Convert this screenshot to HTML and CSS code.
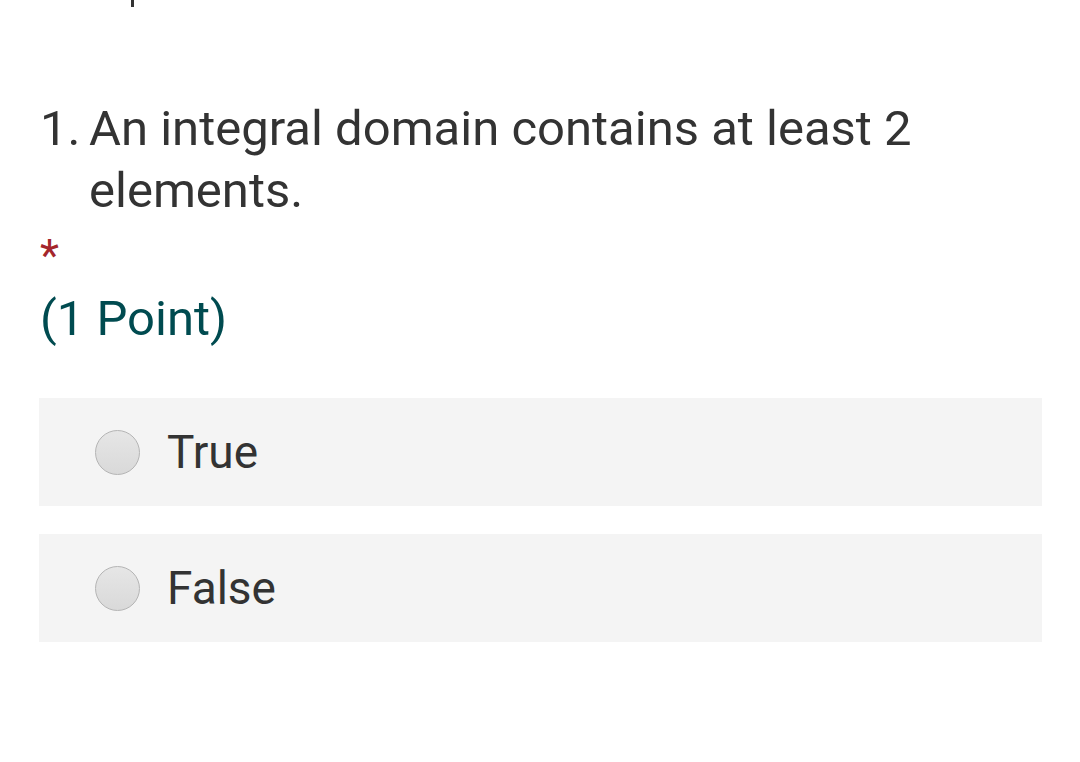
FILE: index.html
```html
<!DOCTYPE html>
<html>
<head>
<meta charset="utf-8">
<link rel="stylesheet" href="styles.css">
</head>
<body>
<div class="page">
  <div class="top-mark"></div>
  <div class="question">
    <div class="title">
      <span class="num">1.</span>
      <span class="text">An integral domain contains at least 2 elements.</span>
    </div>
    <div class="required">*</div>
    <div class="points">(1 Point)</div>
  </div>
  <div class="options">
    <label class="option">
      <span class="radio"></span>
      <span class="label">True</span>
    </label>
    <label class="option">
      <span class="radio"></span>
      <span class="label">False</span>
    </label>
  </div>
</div>
</body>
</html>
```

FILE: styles.css
```css
html, body {
  margin: 0;
  padding: 0;
  background: #ffffff;
}
.page {
  font-family: Roboto, "Noto Sans", sans-serif;
  color: #333333;
  width: 1080px;
  height: 762px;
  overflow: hidden;
}
.top-mark {
  width: 3px;
  height: 7px;
  margin-left: 131px;
  background: #333333;
}
.question {
  padding-left: 40px;
  padding-top: 91px;
  padding-right: 100px;
}
.title {
  display: flex;
  font-size: 49px;
  line-height: 62px;
  color: #333333;
}
.num {
  flex: 0 0 49px;
}
.text {
  flex: 1;
}
.required {
  color: #a4262c;
  font-size: 44px;
  line-height: 40px;
  height: 40px;
  margin-top: 14px;
}
.points {
  color: #004b50;
  font-size: 49px;
  line-height: 62px;
  margin-top: 12px;
}
.options {
  margin-top: 48px;
  padding-left: 39px;
  padding-right: 38px;
  display: flex;
  flex-direction: column;
  gap: 28px;
}
.option {
  display: flex;
  align-items: center;
  height: 108px;
  background: #f4f4f4;
  padding-left: 56px;
}
.radio {
  border-radius: 50%;
  border: 1px solid #b4b4b4;
  background: linear-gradient(#e6e6e6, #d9d9d9);
  box-sizing: border-box;
  width: 45px;
  height: 45px;
  flex: 0 0 45px;
}
.label {
  margin-left: 27px;
  font-size: 46px;
  color: #333333;
}
```
